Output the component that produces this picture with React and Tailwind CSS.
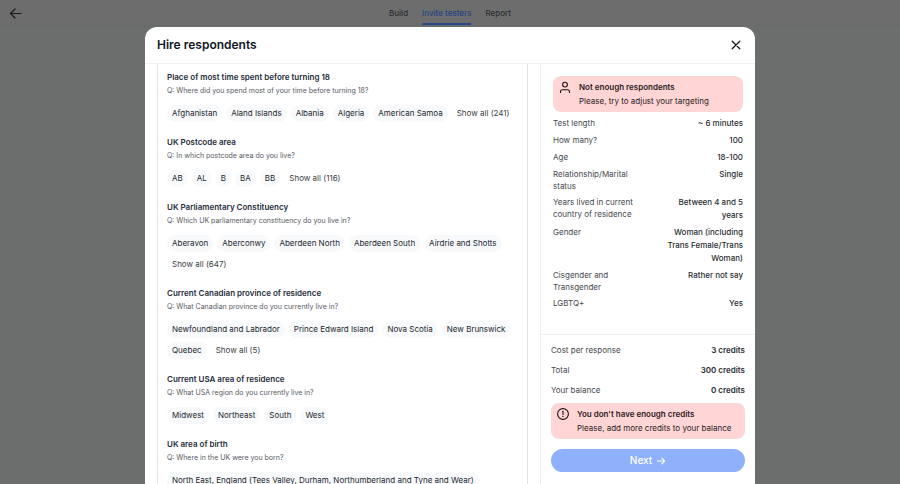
import React from "react";

const sections = [
  {
    title: "Place of most time spent before turning 18",
    question: "Q: Where did you spend most of your time before turning 18?",
    options: ["Afghanistan", "Aland Islands", "Albania", "Algeria", "American Samoa"],
    total: 241,
  },
  {
    title: "UK Postcode area",
    question: "Q: In which postcode area do you live?",
    options: ["AB", "AL", "B", "BA", "BB"],
    total: 116,
  },
  {
    title: "UK Parliamentary Constituency",
    question: "Q: Which UK parliamentary constituency do you live in?",
    options: ["Aberavon", "Aberconwy", "Aberdeen North", "Aberdeen South", "Airdrie and Shotts"],
    total: 647,
  },
  {
    title: "Current Canadian province of residence",
    question: "Q: What Canadian province do you currently live in?",
    options: ["Newfoundland and Labrador", "Prince Edward Island", "Nova Scotia", "New Brunswick", "Quebec"],
    total: 5,
  },
  {
    title: "Current USA area of residence",
    question: "Q: What USA region do you currently live in?",
    options: ["Midwest", "Northeast", "South", "West"],
  },
  {
    title: "UK area of birth",
    question: "Q: Where in the UK were you born?",
    options: ["North East, England (Tees Valley, Durham, Northumberland and Tyne and Wear)"],
  },
];

const criteria = [
  ["Test length", "~ 6 minutes"],
  ["How many?", "100"],
  ["Age", "18-100"],
  ["Relationship/Marital status", "Single"],
  ["Years lived in current country of residence", "Between 4 and 5 years"],
  ["Gender", "Woman (including Trans Female/Trans Woman)"],
  ["Cisgender and Transgender", "Rather not say"],
  ["LGBTQ+", "Yes"],
];

const costs = [
  ["Cost per response", "3 credits"],
  ["Total", "300 credits"],
  ["Your balance", "0 credits"],
];

function Section({ title, question, options, total }) {
  return (
    <section className="flex flex-col">
      <h2 className="text-[8px] leading-[14px] font-semibold text-[#252c3b]">{title}</h2>
      <p className="text-[7px] leading-[13px] text-[#55595f]">{question}</p>
      <div className="mt-2 flex flex-wrap gap-x-1 gap-y-1">
        {options.map((option) => (
          <button
            key={option}
            type="button"
            className="h-[17px] rounded-full bg-[#f7f9fb] px-[5px] text-[8px] leading-[17px] whitespace-nowrap text-[#23272f]"
          >
            {option}
          </button>
        ))}
        {total && (
          <button type="button" className="h-[17px] px-[5px] text-[8px] leading-[17px] text-[#3c4046]">
            Show all ({total})
          </button>
        )}
      </div>
    </section>
  );
}

function Alert({ icon, title, children }) {
  return (
    <div role="alert" className="flex gap-2 rounded-lg bg-[#ffd5d6] px-1.5 py-1 text-[#2a1a20]">
      <span className="pt-px">{icon}</span>
      <div>
        <p className="text-[8px] leading-[14px] font-semibold">{title}</p>
        <p className="text-[8px] leading-[14px]">{children}</p>
      </div>
    </div>
  );
}

function PersonIcon() {
  return (
    <svg className="size-3" viewBox="0 0 12 12" fill="none" stroke="#1d1216" strokeWidth="1.1" strokeLinecap="round">
      <circle cx="6" cy="3.6" r="2.4" />
      <path d="M1.500 11.400v-.6c0-1.200.9-2 2-2h5c1.100 0 2 .8 2 2v.6" />
    </svg>
  );
}

function WarningIcon() {
  return (
    <svg className="size-3" viewBox="0 0 12 12" fill="none" stroke="#1d1216" strokeWidth="1.1" strokeLinecap="round">
      <circle cx="6" cy="6" r="5.400" />
      <path d="M6 3.200v3.200" />
      <path d="M6 8.500v.1" strokeWidth="1.300" />
    </svg>
  );
}

export default function App() {
  return (
    <div className="flex h-screen flex-col overflow-hidden bg-[#6b6e6d] font-['Inter',sans-serif]">
      <header className="grid h-[26px] shrink-0 grid-cols-[1fr_auto_1fr] border-b border-[#666a6b] bg-[#6d6d6d] px-2">
        <button type="button" aria-label="Back" className="w-4">
          <svg className="size-4" viewBox="0 0 16 16" fill="none" stroke="#1b1b1b" strokeWidth="1.200" strokeLinecap="round" strokeLinejoin="round">
            <path d="M13 8.500H2.500M7 4 2.500 8.500 7 13" />
          </svg>
        </button>
        <nav className="flex gap-3.5 text-[8px] font-medium text-[#2c2e31]">
          <a href="#build" className="flex items-center">Build</a>
          <a href="#invite" className="flex items-center border-b-2 border-[#264a87] pt-0.5 text-[#254683]">Invite testers</a>
          <a href="#report" className="flex items-center">Report</a>
        </nav>
      </header>

      <div role="dialog" aria-labelledby="dialog-title" className="mx-auto mt-px flex min-h-0 w-full max-w-[610px] flex-1 flex-col rounded-t-xl bg-white">
        <div className="flex h-[37px] shrink-0 items-center justify-between border-b border-[#eff0f2] px-3">
          <h1 id="dialog-title" className="text-[12px] leading-4 font-semibold text-[#101623]">Hire respondents</h1>
          <button type="button" aria-label="Close" className="p-px">
            <svg className="size-3" viewBox="0 0 12 12" fill="none" stroke="#15181d" strokeWidth="1.300" strokeLinecap="round">
              <path d="M2.200 2.200l7.600 7.600M9.800 2.200l-7.600 7.600" />
            </svg>
          </button>
        </div>

        <div className="flex min-h-0 flex-1">
          <main className="min-w-0 flex-1 overflow-hidden px-3">
            <div className="flex flex-col gap-[13px] border-x border-[#e2e3e6] px-[9px] pt-1.5 pb-4">
              {sections.map((section) => (
                <Section key={section.title} {...section} />
              ))}
            </div>
          </main>

          <aside className="flex w-[215px] shrink-0 flex-col overflow-hidden border-l border-[#eff0f2]">
            <div className="h-[271px] shrink-0 border-b border-[#eff0f2] px-3 pt-3">
              <Alert icon={<PersonIcon />} title="Not enough respondents">
                Please, try to adjust your targeting
              </Alert>
              <dl className="mt-[5px] flex flex-col gap-1">
                {criteria.map(([label, value]) => (
                  <div key={label} className="flex justify-between">
                    <dt className="w-[90px] text-[8px] leading-[12px] text-[#44484e]">{label}</dt>
                    <dd className="w-20 text-right text-[8px] leading-[13px] font-medium text-[#2a2d32]">{value}</dd>
                  </div>
                ))}
              </dl>
            </div>
            <div className="shrink-0 px-2.5 pt-[9px]">
              <dl className="flex flex-col gap-[7px]">
                {costs.map(([label, value]) => (
                  <div key={label} className="flex justify-between text-[8px] leading-[13px]">
                    <dt className="text-[#44484e]">{label}</dt>
                    <dd className="font-semibold text-[#2a2d32]">{value}</dd>
                  </div>
                ))}
              </dl>
              <div className="mt-1.5">
                <Alert icon={<WarningIcon />} title="You don't have enough credits">
                  Please, add more credits to your balance
                </Alert>
              </div>
              <button type="button" className="mt-2.5 flex h-[23px] w-full items-center justify-center gap-1 rounded-full bg-[#8fb0fb] text-[10px] font-medium text-white">
                Next
                <svg className="size-2.5" viewBox="0 0 10 10" fill="none" stroke="currentColor" strokeWidth="1.100" strokeLinecap="round" strokeLinejoin="round">
                  <path d="M1.500 5h7M5.800 2.200l2.800 2.800-2.800 2.800" />
                </svg>
              </button>
            </div>
          </aside>
        </div>
      </div>
    </div>
  );
}
